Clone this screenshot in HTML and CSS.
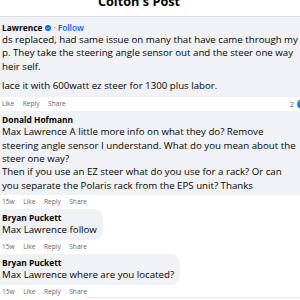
FILE: index.html
```html
<!DOCTYPE html>
<html lang="en">
<head>
    <meta charset="UTF-8">
    <meta name="viewport" content="width=device-width, initial-scale=1.0">
    <title>Colton's Post</title>
    <link rel="stylesheet" href="styles.css">
</head>
<body>
    <div class="page">
        <header class="post-header">
            <h1 class="post-title">Colton's Post</h1>
        </header>

        <div class="comment">
            <div class="bubble bubble-wide first">
                <div class="author">Lawrence
                    <svg class="verified" viewBox="0 0 12 12"><circle cx="6" cy="6" r="6" fill="#0866ff"/><path d="M3.4 6.2l1.8 1.8 3.5-3.6" fill="none" stroke="#fff" stroke-width="1.5"/></svg><span class="dot">·</span><span class="follow">Follow</span>
                </div>
                <p class="text">ds replaced, had same issue on many that have came through my<br>p. They take the steering angle sensor out and the steer one way<br>heir self.</p>
                <p class="text para">lace it with 600watt ez steer for 1300 plus labor.</p>
            </div>
            <div class="meta">
                <span>Like</span><span>Reply</span><span>Share</span>
                <span class="reactions">2<i class="like-icon"></i></span>
            </div>
        </div>

        <div class="comment">
            <div class="bubble bubble-wide">
                <div class="author">Donald Hofmann</div>
                <p class="text">Max Lawrence A little more info on what they do? Remove<br>steering angle sensor I understand. What do you mean about the<br>steer one way?<br>Then if you use an EZ steer what do you use for a rack? Or can<br>you separate the Polaris rack from the EPS unit? Thanks</p>
            </div>
            <div class="meta"><span>15w</span><span>Like</span><span>Reply</span><span>Share</span></div>
        </div>

        <div class="comment">
            <div class="bubble">
                <div class="author">Bryan Puckett</div>
                <p class="text">Max Lawrence follow</p>
            </div>
            <div class="meta"><span>15w</span><span>Like</span><span>Reply</span><span>Share</span></div>
        </div>

        <div class="comment">
            <div class="bubble">
                <div class="author">Bryan Puckett</div>
                <p class="text">Max Lawrence where are you located?</p>
            </div>
            <div class="meta"><span>15w</span><span>Like</span><span>Reply</span><span>Share</span></div>
        </div>

        <div class="rule"></div>
        <div class="composer"></div>
    </div>
</body>
</html>
```

FILE: styles.css
```css
html, body {
    margin: 0;
    padding: 0;
    background: #fff;
}
.page {
    width: 300px;
    height: 300px;
    overflow: hidden;
    font-family: "Segoe UI", "Open Sans", sans-serif;
    color: #050505;
}
.post-header {
    height: 16px;
    overflow: hidden;
    border-bottom: 1px solid #dadde1;
    box-shadow: 0 1px 1px rgba(0, 0, 0, 0.04);
}
.post-title {
    margin: -7px 22px 0 0;
    font-size: 12.7px;
    line-height: 16px;
    font-weight: 700;
    text-align: center;
}
.bubble {
    display: inline-block;
    margin-left: -10px;
    padding: 3px 6px 3px 12px;
    background: #f0f2f5;
    border-radius: 9px;
}
.bubble-wide {
    display: block;
    margin-right: -10px;
}
.first {
    margin-top: 1px;
    padding-top: 4px;
    padding-bottom: 4.8px;
}
.author {
    display: flex;
    align-items: center;
    font-size: 8.4px;
    line-height: 11px;
    font-weight: 700;
    white-space: nowrap;
}
.verified {
    width: 6px;
    height: 6px;
    margin-left: 3px;
}
.dot {
    margin: 0 2px;
    font-weight: 400;
    color: #65676b;
}
.follow {
    color: #0866ff;
    font-weight: 600;
}
.text {
    margin: 0;
    font-size: 9.7px;
    line-height: 13.3px;
    white-space: nowrap;
}
.para {
    margin-top: 6px;
}
.meta {
    position: relative;
    display: flex;
    gap: 8.5px;
    height: 12px;
    margin: 1.5px 0 1px 2px;
    font-size: 6.6px;
    line-height: 12px;
    color: #65676b;
}
.reactions {
    position: absolute;
    right: -7px;
    top: 0;
    display: flex;
    align-items: center;
    gap: 3px;
    height: 12px;
    font-size: 7.5px;
    color: #65676b;
}
.like-icon {
    width: 10px;
    height: 10px;
    border-radius: 50%;
    background: linear-gradient(#18afff, #0062df);
}
.rule {
    height: 1px;
    margin: -2px 0 0 86px;
    background: #e4e6eb;
}
.composer {
    height: 12px;
    margin: 6px -10px 0 -10px;
    background: #f0f2f5;
}
```
